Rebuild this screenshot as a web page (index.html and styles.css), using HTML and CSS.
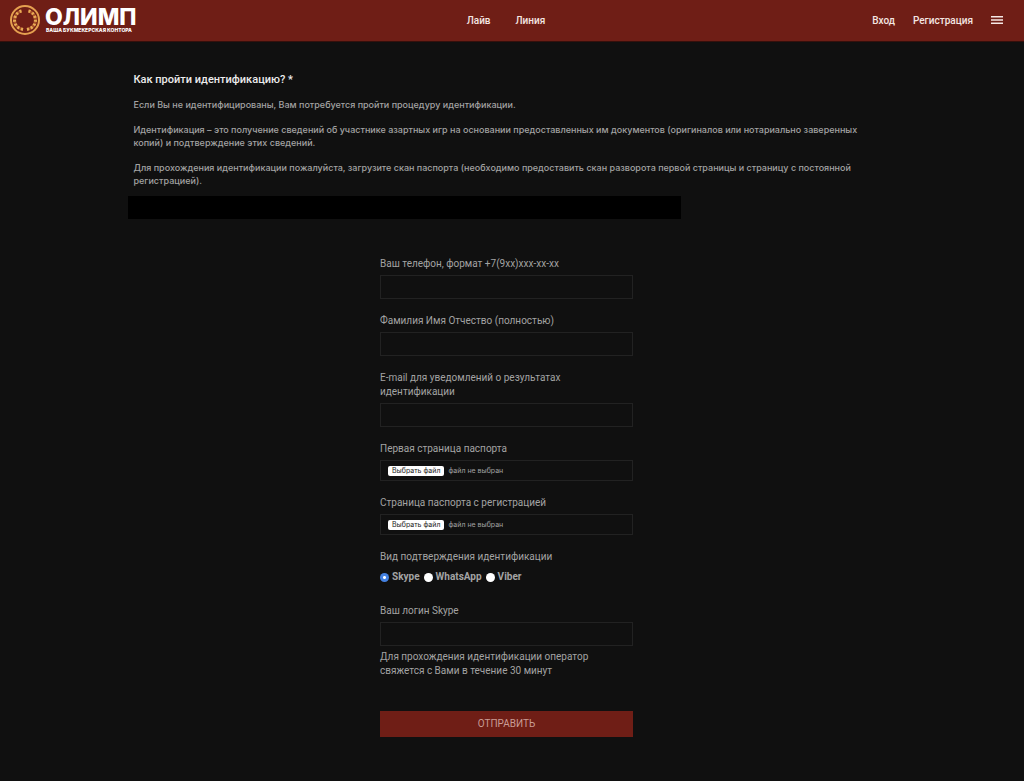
FILE: index.html
```html
<!DOCTYPE html>
<html lang="ru">
<head>
<meta charset="utf-8">
<meta name="viewport" content="width=device-width, initial-scale=1">
<title>Олимп – идентификация</title>
<link rel="stylesheet" href="styles.css">
</head>
<body>
<header class="header">
  <a class="logo" href="#">
    <svg class="logo-mark" viewBox="0 0 32 32" aria-hidden="true">
      <circle class="ring" cx="16" cy="16" r="14"/>
      <g class="wreath">
        <path d="M14 25.500C2 23 4 9 12.500 7"/>
        <path d="M18 25.500C30 23 28 9 19.500 7"/>
      </g>
      <g class="leaves">
        <path d="M14 25.500C2 23 4 9 12.500 7"/>
        <path d="M18 25.500C30 23 28 9 19.500 7"/>
      </g>
    </svg>
    <span class="logo-text">
      <span class="logo-name">ОЛИМП</span>
      <span class="logo-tagline">ВАША БУКМЕКЕРСКАЯ КОНТОРА</span>
    </span>
  </a>
  <nav class="nav">
    <a href="#">Лайв</a>
    <a href="#">Линия</a>
  </nav>
  <div class="account">
    <a href="#">Вход</a>
    <a href="#">Регистрация</a>
    <button class="menu" type="button" aria-label="Меню">
      <svg class="menu-icon" viewBox="0 0 12 8" aria-hidden="true"><path d="M0 .7h12M0 4h12M0 7.300h12"/></svg>
    </button>
  </div>
</header>
<main class="page">
  <section class="intro">
    <h1>Как пройти идентификацию? *</h1>
    <p>Если Вы не идентифицированы, Вам потребуется пройти процедуру идентификации.</p>
    <p>Идентификация – это получение сведений об участнике азартных игр на основании предоставленных им документов (оригиналов или нотариально заверенных копий) и подтверждение этих сведений.</p>
    <p>Для прохождения идентификации пожалуйста, загрузите скан паспорта (необходимо предоставить скан разворота первой страницы и страницу с постоянной регистрацией).</p>
    <div class="blank"></div>
  </section>
  <form class="form">
    <div class="field">
      <label for="phone">Ваш телефон, формат +7(9xx)xxx-xx-xx</label>
      <input class="text" id="phone" type="tel">
    </div>
    <div class="field">
      <label for="name">Фамилия Имя Отчество (полностью)</label>
      <input class="text" id="name" type="text">
    </div>
    <div class="field">
      <label for="email">E-mail для уведомлений о результатах идентификации</label>
      <input class="text" id="email" type="email">
    </div>
    <div class="field">
      <label for="page1">Первая страница паспорта</label>
      <div class="file">
        <input class="file-input" id="page1" type="file">
        <label class="file-button" for="page1">Выбрать файл</label>
        <span>файл не выбран</span>
      </div>
    </div>
    <div class="field">
      <label for="page2">Страница паспорта с регистрацией</label>
      <div class="file">
        <input class="file-input" id="page2" type="file">
        <label class="file-button" for="page2">Выбрать файл</label>
        <span>файл не выбран</span>
      </div>
    </div>
    <fieldset class="choices">
      <legend>Вид подтверждения идентификации</legend>
      <div class="radios">
        <label><input type="radio" name="kind" checked>Skype</label>
        <label><input type="radio" name="kind">WhatsApp</label>
        <label><input type="radio" name="kind">Viber</label>
      </div>
    </fieldset>
    <div class="field">
      <label for="login">Ваш логин Skype</label>
      <input class="text" id="login" type="text">
      <p class="hint">Для прохождения идентификации оператор свяжется с Вами в течение 30 минут</p>
    </div>
    <button class="submit" type="submit">ОТПРАВИТЬ</button>
  </form>
</main>
</body>
</html>
```
FILE: styles.css
```css
* { box-sizing: border-box; }

body {
  margin: 0;
  background: #101010;
  color: #a3a3a3;
  font-family: Roboto, "Liberation Sans", sans-serif;
  font-size: 10px;
  line-height: 13px;
}

h1, p { margin: 0; }

.header {
  display: grid;
  grid-template-columns: 1fr auto 1fr;
  align-items: center;
  height: 42px;
  padding: 0 21px 1px 9px;
  background: #6f1e16;
  border-bottom: 1px solid #35100c;
  font-weight: 500;
}

.header a { color: #f4e6e2; text-decoration: none; }

.logo { display: flex; align-items: center; gap: 4px; }
.logo-mark { width: 32px; height: 32px; fill: none; }
.ring { stroke: #e5a050; stroke-width: 2; }
.wreath { stroke: #a8502a; stroke-width: 3; }
.leaves { stroke: #e8ad55; stroke-width: 3; stroke-dasharray: 2 2; }
.logo-text { display: flex; flex-direction: column; color: #fff; }
.logo-name { font: 800 23px/20px Inter, sans-serif; }
.logo-tagline { font: 800 5px/6px Inter, sans-serif; white-space: nowrap; padding-left: 1px; }

.nav { display: flex; gap: 25px; }
.account { display: flex; align-items: center; justify-content: flex-end; gap: 18px; }

.menu {
  display: flex;
  padding: 0;
  border: 0;
  background: none;
}
.menu-icon { width: 12px; height: 8px; stroke: #f6e8e5; stroke-width: 1.4; }

.page { padding: 31px 11px 44px 0; }

.intro {
  max-width: 758px;
  margin: 0 auto;
  padding: 0 6px;
  display: flex;
  flex-direction: column;
  gap: 12px;
}
.intro h1 { color: #ececec; font-size: 11px; line-height: 13px; font-weight: 500; }
.intro p { font-family: Inter, Roboto, sans-serif; font-size: 9px; font-weight: 500; }
.blank { width: 553px; max-width: 100%; height: 23px; margin: -3px -6px 0; background: #000; }

.form {
  max-width: 253px;
  margin: 38px auto 0;
  display: flex;
  flex-direction: column;
  gap: 15px;
  font-size: 10px;
  line-height: 14px;
}

.field { display: flex; flex-direction: column; gap: 4px; }

.text, .file { width: 100%; border: 1px solid #222; background: #101010; }
.text { height: 24px; padding: 0 7px; color: #ccc; font: inherit; }

.file {
  display: flex;
  align-items: center;
  gap: 4px;
  height: 21px;
  padding: 0 7px;
  font: 7px/10px Inter, sans-serif;
}
.file-input { position: absolute; width: 1px; height: 1px; opacity: 0; }
.file-button { padding: 0 4px; border-radius: 2px; background: #fff; color: #222; }

.choices { margin: 0; padding: 0 0 5px; border: 0; }
.choices legend { padding: 0; }
.radios { display: flex; gap: 4px; padding-top: 6px; font-weight: 700; }
.radios label { display: flex; align-items: center; gap: 3px; }
.radios input {
  appearance: none;
  width: 9px;
  height: 9px;
  margin: 0;
  border-radius: 50%;
  background: #fff;
}
.radios input:checked { background: radial-gradient(circle, #fff 0 1px, #4380e0 2px); }

.submit {
  height: 26px;
  margin-top: 18px;
  border: 0;
  background: #6f1e16;
  color: #c99c95;
  font: inherit;
}
```
